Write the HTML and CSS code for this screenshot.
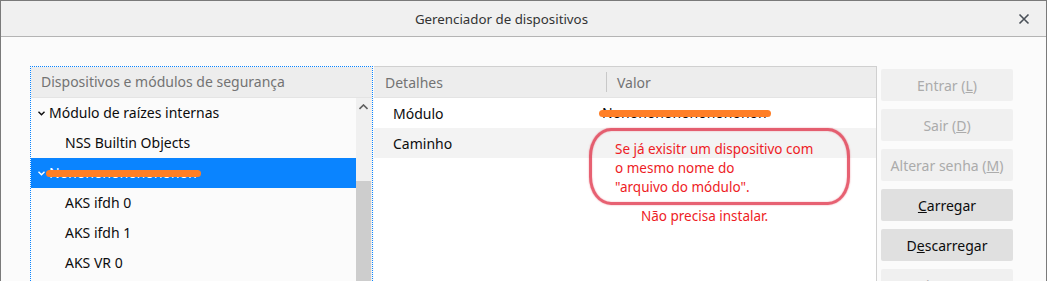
FILE: index.html
```html
<!DOCTYPE html>
<html lang="pt-BR">
<head>
    <meta charset="UTF-8">
    <meta name="viewport" content="width=device-width, initial-scale=1.0">
    <title>Gerenciador de dispositivos</title>
    <link rel="stylesheet" href="styles.css">
</head>
<body>

    <div class="window">

        <!-- Title bar -->
        <div class="titlebar">
            <span class="title">Gerenciador de dispositivos</span>
            <svg class="close-btn" width="12" height="12" viewBox="0 0 12 12">
                <path d="M1.5 1.5 L10.5 10.5 M10.5 1.5 L1.5 10.5" stroke="#4a5058" stroke-width="1.6" fill="none"/>
            </svg>
        </div>

        <!-- Main content -->
        <div class="content">

            <!-- Device tree -->
            <div class="tree">
                <div class="tree-head">Dispositivos e módulos de segurança</div>
                <div class="tree-body">
                    <ul class="tree-rows">
                        <li class="row parent">
                            <svg class="twisty" width="7" height="5" viewBox="0 0 7 5"><path d="M0.5 0.8 L3.5 3.8 L6.5 0.8" stroke="currentColor" stroke-width="1.4" fill="none"/></svg>
                            Módulo de raízes internas
                        </li>
                        <li class="row child">NSS Builtin Objects</li>
                        <li class="row parent selected">
                            <svg class="twisty" width="7" height="5" viewBox="0 0 7 5"><path d="M0.5 0.8 L3.5 3.8 L6.5 0.8" stroke="currentColor" stroke-width="1.4" fill="none"/></svg>
                            <span class="redacted">Nonononononononon<span class="scribble"></span></span>
                        </li>
                        <li class="row child">AKS ifdh 0</li>
                        <li class="row child">AKS ifdh 1</li>
                        <li class="row child">AKS VR 0</li>
                    </ul>
                    <div class="scrollbar">
                        <svg class="scroll-arrow" width="9" height="6" viewBox="0 0 9 6"><path d="M0.5 5 L4.5 1 L8.5 5" stroke="#5f5f5f" stroke-width="1.6" fill="none"/></svg>
                        <div class="scroll-thumb"></div>
                    </div>
                </div>
            </div>

            <!-- Details table -->
            <div class="details">
                <div class="details-head">
                    <div class="col-name">Detalhes</div>
                    <div class="col-sep"></div>
                    <div class="col-value">Valor</div>
                </div>
                <div class="details-row">
                    <div class="col-name">Módulo</div>
                    <div class="col-value">
                        <span class="redacted">Nononononononononon<span class="scribble"></span></span>
                    </div>
                </div>
                <div class="details-row alt">
                    <div class="col-name">Caminho</div>
                    <div class="col-value"></div>
                </div>

                <!-- Annotation drawn over the table -->
                <div class="note-box">
                    Se já exisitr um dispositivo com<br>
                    o mesmo nome do<br>
                    "arquivo do módulo".
                </div>
                <div class="note-text">Não precisa instalar.</div>
            </div>

            <!-- Buttons -->
            <div class="actions">
                <button class="btn" disabled>Entrar (<u>L</u>)</button>
                <button class="btn" disabled>Sair (<u>D</u>)</button>
                <button class="btn" disabled>Alterar senha (<u>M</u>)</button>
                <button class="btn"><u>C</u>arregar</button>
                <button class="btn">D<u>e</u>scarregar</button>
                <button class="btn" disabled>Ativar FIPS</button>
            </div>

        </div>
    </div>

</body>
</html>
```

FILE: styles.css
```css
/* Global Styles */
body {
    margin: 0;
    font-family: "Noto Sans", "Open Sans", sans-serif;
    font-size: 14px;
    color: #0c0c0d;
    background-color: #fbfbfb;
    height: 281px;
    overflow: hidden;
}

/* Window frame */
.window {
    border: 1px solid #7a7a7a;
    border-bottom: none;
    height: 300px;
    background-color: #fbfbfb;
}

.titlebar {
    height: 35px;
    background-color: #f0f0f0;
    border-bottom: 1px solid #b4b4b4;
    display: flex;
    align-items: center;
    justify-content: center;
    padding-right: 44px;
    position: relative;
}

.title {
    font-size: 13.3px;
    color: #333;
}

.close-btn {
    position: absolute;
    right: 16px;
    top: 12px;
}

/* Content area */
.content {
    display: flex;
    padding: 29px 32px 0 29px;
}

/* Device tree */
.tree {
    width: 341px;
    border: 1px dotted #0a84ff;
    border-bottom: none;
    flex-shrink: 0;
}

.tree-head {
    height: 30px;
    line-height: 30px;
    padding-left: 10px;
    background-color: #ededed;
    border-bottom: 1px solid #e4e4e4;
    color: #737373;
    font-size: 14px;
}

.tree-body {
    display: flex;
    height: 190px;
}

.tree-rows {
    list-style: none;
    margin: 0;
    padding: 0;
    flex-grow: 1;
}

.row {
    height: 30px;
    line-height: 30px;
    white-space: nowrap;
    display: flex;
    align-items: center;
}

.row.parent {
    padding-left: 7px;
    color: #0c0c0d;
}

.row.child {
    padding-left: 34px;
}

.twisty {
    margin-right: 4px;
    color: #0c0c0d;
}

.row.selected {
    background-color: #0a84ff;
    color: #fff;
}

.row.selected .twisty {
    color: #fff;
}

/* Redacted text with orange marker */
.redacted {
    position: relative;
    display: inline-block;
    line-height: 20px;
}

.scribble {
    position: absolute;
    left: -3px;
    right: -4px;
    top: 7px;
    height: 7px;
    border-radius: 4px;
    background-color: #ff7f27;
}

/* Scrollbar */
.scrollbar {
    width: 16px;
    position: relative;
    background-color: #f0f0f0;
}

.scroll-arrow {
    position: absolute;
    left: 3px;
    top: 6px;
}

.scroll-thumb {
    position: absolute;
    left: 0;
    right: 1px;
    top: 83px;
    bottom: 0;
    background-color: #cdcdcd;
}

/* Details table */
.details {
    width: 502px;
    border-top: 1px solid #d0d0d0;
    border-right: 1px solid #d0d0d0;
    position: relative;
    flex-shrink: 0;
    margin-left: 1px;
    background-color: #fff;
}

.details-head {
    height: 30px;
    display: flex;
    align-items: center;
    background-color: #ededed;
    border-bottom: 1px solid #e4e4e4;
    color: #737373;
    font-size: 14px;
}

.details-head .col-name {
    width: 221px;
    padding-left: 11px;
}

.col-sep {
    width: 1px;
    height: 20px;
    background-color: #c8c8c8;
}

.details-head .col-value {
    padding-left: 10px;
}

.details-row {
    height: 30px;
    display: flex;
    align-items: center;
    background-color: #fff;
}

.details-row.alt {
    background-color: #f3f3f3;
}

.details-row .col-name {
    width: 209px;
    padding-left: 19px;
}

/* Annotation */
.note-box {
    position: absolute;
    left: 215px;
    top: 61px;
    width: 232px;
    height: 62px;
    padding: 9px 0 0 23px;
    border: 3px solid rgba(222, 36, 60, 0.72);
    border-radius: 22px / 28px;
    box-shadow: 0 0 1.5px rgba(222, 36, 60, 0.6), inset 0 0 1.5px rgba(222, 36, 60, 0.5);
    color: #ee1c25;
    font-size: 13.5px;
    line-height: 19px;
}

.note-text {
    position: absolute;
    left: 267px;
    top: 140px;
    color: #ee1c25;
    font-size: 13.5px;
}

/* Buttons */
.actions {
    display: flex;
    flex-direction: column;
    gap: 8px;
    margin-left: 4px;
    padding-top: 3px;
}

.btn {
    width: 132px;
    height: 32px;
    border: none;
    border-radius: 2px;
    background-color: #e0e0e0;
    color: #0c0c0d;
    font-family: inherit;
    font-size: 14px;
    padding: 0;
}

.btn:disabled {
    background-color: #f0f0f0;
    color: #ababab;
}
```
